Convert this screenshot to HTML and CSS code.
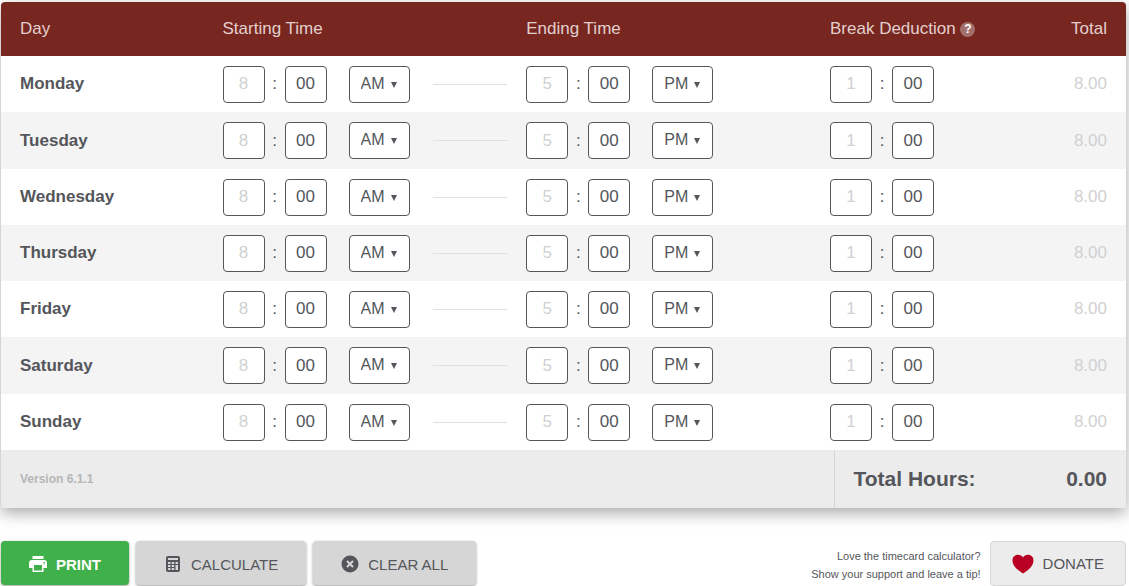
FILE: index.html
```html
<!DOCTYPE html>
<html lang="en">
<head>
<meta charset="utf-8">
<title>Time Card Calculator</title>
<link rel="stylesheet" href="styles.css">
</head>
<body>
<main class="page">
  <section class="card">
    <table class="hours">
      <colgroup><col class="col-day"><col class="col-time"><col class="col-time"><col class="col-break"><col class="col-total"></colgroup>
      <thead>
        <tr>
          <th scope="col">Day</th>
          <th scope="col">Starting Time</th>
          <th scope="col">Ending Time</th>
          <th scope="col">Break Deduction <button type="button" class="help" aria-label="About break deductions">?</button></th>
          <th scope="col" class="total">Total</th>
        </tr>
      </thead>
      <tbody id="days"></tbody>
    </table>
    <div class="summary">
      <div class="version">Version 6.1.1</div>
      <div class="grand"><span>Total Hours:</span><output>0.00</output></div>
    </div>
  </section>
  <div class="actions">
    <button type="button" class="btn btn-print">
      <svg width="18" height="18" viewBox="0 0 18 18" aria-hidden="true"><path fill="currentColor" fill-rule="evenodd" d="M3.500 1h11v3h-11zM3 5h12a3 3 0 0 1 3 3v5h-3.500v4h-11v-4H0V8a3 3 0 0 1 3-3zM5 10v5.500h8V10zM14.500 7v1.500H16V7z"/></svg>
      PRINT
    </button>
    <button type="button" class="btn">
      <svg width="18" height="18" viewBox="0 0 18 18" aria-hidden="true"><path fill="currentColor" fill-rule="evenodd" d="M4 1h10a2 2 0 0 1 2 2v12a2 2 0 0 1-2 2H4a2 2 0 0 1-2-2V3a2 2 0 0 1 2-2zm0 2v2h10V3zM4 7v2h2.500V7zm3.700 0v2h2.500V7zm3.800 0v2H14V7zM4 10v2h2.500v-2zm3.700 0v2h2.500v-2zm3.800 0v5H14v-5zM4 13v2h2.500v-2zm3.700 0v2h2.500v-2z"/></svg>
      CALCULATE
    </button>
    <button type="button" class="btn">
      <svg width="18" height="18" viewBox="0 0 18 18" aria-hidden="true"><circle cx="9" cy="9" r="8.500" fill="currentColor"/><path d="M6 6l6 6M12 6l-6 6" stroke="#d6d6d6" stroke-width="2"/></svg>
      CLEAR ALL
    </button>
    <p class="tip">Love the timecard calculator?<br>Show your support and leave a tip!</p>
    <button type="button" class="btn btn-donate">
      <svg width="22" height="20" viewBox="0 0 22 20" aria-hidden="true"><path fill="#b90024" d="M11 19.500C8 17.500 .5 13 .5 6.500.5 3 3 .8 6 .8c2.200 0 4 1 5 2.700C12 1.800 13.800.8 16 .8c3 0 5.500 2.200 5.500 5.700 0 6.500-7.500 11-10.500 13z"/></svg>
      DONATE
    </button>
  </div>
</main>
<script src="app.js"></script>
</body>
</html>
```
FILE: app.js
```js
const days = ["Monday", "Tuesday", "Wednesday", "Thursday", "Friday", "Saturday", "Sunday"];

function fields(label, hour) {
  return `<input class="num" aria-label="${label} hours" placeholder="${hour}">` +
    `<span class="colon">:</span>` +
    `<input class="num" aria-label="${label} minutes" value="00">`;
}

function period(label, value) {
  const options = ["AM", "PM"]
    .map(p => `<option${p === value ? " selected" : ""}>${p}</option>`).join("");
  return `<span class="period"><select aria-label="${label} AM or PM">${options}</select></span>`;
}

document.getElementById("days").innerHTML = days.map(day => `
  <tr>
    <th scope="row">${day}</th>
    <td><div class="time">${fields(day + " start", 8)}${period(day + " start", "AM")}<span class="dash"></span></div></td>
    <td><div class="time">${fields(day + " end", 5)}${period(day + " end", "PM")}</div></td>
    <td><div class="time">${fields(day + " break", 1)}</div></td>
    <td class="total">8.00</td>
  </tr>`).join("");
```
FILE: styles.css
```css
* { box-sizing: border-box; }

body {
  margin: 0;
  background: #fff;
  color: #54565b;
  font-family: "Liberation Sans", Arial, sans-serif;
  font-size: 17px;
}

button, input, select { font: inherit; color: inherit; }

.page { padding: 2px 3px 0 1px; }

.card {
  border-radius: 4px;
  box-shadow: 0 5px 16px rgba(0, 0, 0, 0.35);
}

.hours {
  width: 100%;
  table-layout: fixed;
  border-collapse: collapse;
  border-radius: 4px 4px 0 0;
  overflow: hidden;
}

.col-day { width: 18%; }
.col-time { width: 27%; }
.col-break { width: 18%; }
.col-total { width: 10%; }

th, td { padding: 0 19px; text-align: left; white-space: nowrap; }

thead tr { height: 54px; background: #772720; }
thead th { color: #e3d0ce; font-weight: normal; }

tbody tr { height: 56px; background: #fff; }
tbody tr:nth-child(even) { background: #f4f4f4; }
tbody tr:nth-child(4n + 2) { height: 57px; }

.hours .total { padding-left: 0; text-align: right; }
td.total { color: #d0d1d2; }

.help {
  width: 15px;
  height: 15px;
  padding: 0;
  border: 0;
  border-radius: 50%;
  background: #a4706c;
  color: #fff;
  font-size: 12px;
  font-weight: bold;
  line-height: 15px;
  vertical-align: 1px;
}

.time { display: flex; align-items: center; }

.num {
  width: 42px;
  height: 37px;
  padding: 0;
  border: 1px solid #54565b;
  border-radius: 4px;
  background: #fff;
  text-align: center;
}
.num::placeholder { color: #d0d1d2; opacity: 1; }

.colon { width: 20px; text-align: center; }

.period { position: relative; margin-left: 22px; }
.period select {
  display: block;
  width: 61px;
  height: 37px;
  padding: 0 0 2px 11px;
  border: 1px solid #54565b;
  border-radius: 4px;
  background: #fff;
  appearance: none;
  font-size: 16px;
}
.period::after {
  content: "";
  position: absolute;
  top: 16px;
  right: 13px;
  border: 3px solid transparent;
  border-top: 6px solid #54565b;
  border-bottom: 0;
  pointer-events: none;
}

.dash { flex: 1; height: 1px; margin: 0 -19px 0 23px; background: #e0e0e2; }

.summary {
  display: flex;
  height: 58px;
  border-radius: 0 0 4px 4px;
  background: #ececec;
}
.version {
  flex: 1;
  padding-left: 19px;
  color: #b5b6b7;
  font-size: 12px;
  font-weight: bold;
  line-height: 59px;
}
.grand {
  display: flex;
  justify-content: space-between;
  align-items: center;
  width: 26%;
  padding: 0 19px;
  border-left: 1px solid #d4d4d4;
  font-size: 21px;
  font-weight: bold;
}

.actions { display: flex; gap: 7px; margin-top: 33px; }

.btn {
  display: flex;
  align-items: center;
  justify-content: center;
  gap: 9px;
  height: 44px;
  padding: 2px 28px 0;
  border: 0;
  border-radius: 4px;
  background: #d6d6d6;
  box-shadow: 0 1px 3px rgba(0, 0, 0, 0.4);
  font-size: 15px;
  white-space: nowrap;
}
.btn-print { background: #40b04a; color: #fff; font-weight: bold; }
.btn-donate {
  height: 45px;
  padding: 0 21px;
  border: 1px solid #d6d6d6;
  background: #ececec;
  box-shadow: none;
}

.tip {
  flex: 1;
  margin: 6px 2px 0 0;
  font-size: 11px;
  line-height: 18px;
  text-align: right;
}
```
